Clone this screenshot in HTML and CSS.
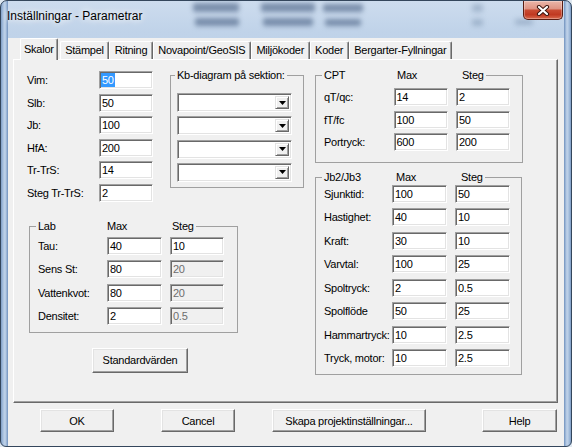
FILE: index.html
```html
<!DOCTYPE html>
<html lang="sv">
<head>
<meta charset="utf-8">
<title>Inställningar - Parametrar</title>
<link rel="stylesheet" href="styles.css">
</head>
<body>
<div class="window">
  <div class="glass" aria-hidden="true">
    <span class="blob b1"></span><span class="blob b2"></span><span class="blob b3"></span>
    <span class="blob b4"></span><span class="blob b5"></span><span class="blob b6"></span>
    <span class="blob faint b7"></span><span class="blob faint b8"></span><span class="blob faint b9"></span>
  </div>
  <div class="titlebar">
    <span class="title">Inställningar - Parametrar</span>
    <button class="close" aria-label="Stäng">
      <svg width="14" height="11" viewBox="0 0 14 11">
        <path d="M3 2L11 9M11 2L3 9" stroke="#3e1710" stroke-width="4.2" stroke-linecap="round"/>
        <path d="M3 2L11 9M11 2L3 9" stroke="#fff" stroke-width="2.2" stroke-linecap="round"/>
      </svg>
    </button>
  </div>
  <div class="client">
    <div class="tabs">
      <div class="tab active">Skalor</div>
      <div class="tab">Stämpel</div>
      <div class="tab">Ritning</div>
      <div class="tab">Novapoint/GeoSIS</div>
      <div class="tab">Miljökoder</div>
      <div class="tab">Koder</div>
      <div class="tab">Bergarter-Fyllningar</div>
    </div>
    <div class="panel">
      <div class="left-area">
        <div class="top-row">
          <div class="fields">
            <span class="lbl">Vim:</span><div class="field"><span class="sel">50</span></div>
            <span class="lbl">Slb:</span><div class="field">50</div>
            <span class="lbl">Jb:</span><div class="field">100</div>
            <span class="lbl">HfA:</span><div class="field">200</div>
            <span class="lbl">Tr-TrS:</span><div class="field">14</div>
            <span class="lbl">Steg Tr-TrS:</span><div class="field">2</div>
          </div>
          <fieldset class="group kb">
            <legend>Kb-diagram på sektion:</legend>
            <div class="combos">
              <div class="combo"><span class="drop"><svg width="7" height="4" viewBox="0 0 7 4"><path d="M0 0H7L3.5 4Z" fill="#000"/></svg></span></div>
              <div class="combo"><span class="drop"><svg width="7" height="4" viewBox="0 0 7 4"><path d="M0 0H7L3.5 4Z" fill="#000"/></svg></span></div>
              <div class="combo"><span class="drop"><svg width="7" height="4" viewBox="0 0 7 4"><path d="M0 0H7L3.5 4Z" fill="#000"/></svg></span></div>
              <div class="combo"><span class="drop"><svg width="7" height="4" viewBox="0 0 7 4"><path d="M0 0H7L3.5 4Z" fill="#000"/></svg></span></div>
            </div>
          </fieldset>
        </div>
        <fieldset class="group lab">
          <legend><span class="lg1">Lab</span><span class="lg2">Max</span><span>Steg</span></legend>
          <div class="grid3">
            <span class="lbl">Tau:</span><div class="field">40</div><div class="field">10</div>
            <span class="lbl">Sens St:</span><div class="field">80</div><div class="field dis">20</div>
            <span class="lbl">Vattenkvot:</span><div class="field">80</div><div class="field dis">20</div>
            <span class="lbl">Densitet:</span><div class="field">2</div><div class="field dis">0.5</div>
          </div>
        </fieldset>
        <button class="btn std">Standardvärden</button>
      </div>
      <div class="right-area">
        <fieldset class="group cpt">
          <legend><span class="lg1">CPT</span><span class="lg2">Max</span><span>Steg</span></legend>
          <div class="grid3">
            <span class="lbl">qT/qc:</span><div class="field">14</div><div class="field">2</div>
            <span class="lbl">fT/fc</span><div class="field">100</div><div class="field">50</div>
            <span class="lbl">Portryck:</span><div class="field">600</div><div class="field">200</div>
          </div>
        </fieldset>
        <fieldset class="group jb">
          <legend><span class="lg1">Jb2/Jb3</span><span class="lg2">Max</span><span>Steg</span></legend>
          <div class="grid3">
            <span class="lbl">Sjunktid:</span><div class="field">100</div><div class="field">50</div>
            <span class="lbl">Hastighet:</span><div class="field">40</div><div class="field">10</div>
            <span class="lbl">Kraft:</span><div class="field">30</div><div class="field">10</div>
            <span class="lbl">Varvtal:</span><div class="field">100</div><div class="field">25</div>
            <span class="lbl">Spoltryck:</span><div class="field">2</div><div class="field">0.5</div>
            <span class="lbl">Spolflöde</span><div class="field">50</div><div class="field">25</div>
            <span class="lbl">Hammartryck:</span><div class="field">10</div><div class="field">2.5</div>
            <span class="lbl">Tryck, motor:</span><div class="field">10</div><div class="field">2.5</div>
          </div>
        </fieldset>
      </div>
    </div>
    <div class="buttons">
      <button class="btn ok">OK</button>
      <button class="btn cancel">Cancel</button>
      <button class="btn skapa">Skapa projektinställningar...</button>
      <button class="btn help">Help</button>
    </div>
  </div>
</div>
</body>
</html>
```
FILE: styles.css
```css
* { box-sizing: border-box; }
html, body { margin: 0; padding: 0; }
body {
  width: 572px; height: 447px; overflow: hidden;
  background: #dfe8f1;
  font-family: "Liberation Sans", Arial, sans-serif;
  font-size: 11px; letter-spacing: -0.25px; color: #000;
}
.window {
  position: relative;
  width: 572px; height: 447px;
  border: 1px solid #34465c;
  border-radius: 7px 7px 6px 6px;
  padding: 0 7px 7px;
  overflow: hidden;
  background:
    linear-gradient(90deg, #7e9dc6 0, #a7c0de 2px, #c2d4ea 4px, #8eabd0 6px, #6f8fbb 7px, rgba(0,0,0,0) 7px),
    linear-gradient(270deg, #7e9dc6 0, #a7c0de 2px, #c2d4ea 4px, #8eabd0 6px, #6f8fbb 7px, rgba(0,0,0,0) 7px),
    linear-gradient(180deg, #cddcee 0, #c0d3e9 30px, #aac2de 100%);
}
.glass { position: absolute; inset: 0; pointer-events: none; }
.blob { position: absolute; background: rgba(58, 82, 118, .55); filter: blur(2.5px); border-radius: 2px; }
.blob.faint { background: rgba(80, 105, 140, .3); }
.b1 { left: 192px; top: 2px; width: 46px; height: 9px; }
.b2 { left: 194px; top: 17px; width: 44px; height: 8px; }
.b3 { left: 260px; top: 2px; width: 54px; height: 9px; }
.b4 { left: 262px; top: 17px; width: 50px; height: 8px; }
.b5 { left: 322px; top: 3px; width: 40px; height: 8px; }
.b6 { left: 324px; top: 18px; width: 36px; height: 7px; }
.b7 { left: 471px; top: 3px; width: 11px; height: 8px; }
.b8 { left: 471px; top: 18px; width: 11px; height: 7px; }
.b9 { left: 514px; top: 18px; width: 18px; height: 6px; }

.titlebar {
  position: relative;
  height: 29px;
  display: flex; align-items: center; justify-content: space-between;
}
.title {
  font-size: 12px; letter-spacing: 0;
  margin: 1px 0 0 -1px;
  text-shadow: 0 0 6px #fff, 0 0 10px rgba(255,255,255,.85);
}
.close {
  align-self: flex-start;
  width: 40px; height: 19px;
  margin-right: 1px;
  padding: 0;
  border: 1px solid #5a1d12; border-top: 0;
  border-radius: 0 0 5px 5px;
  background: linear-gradient(180deg, #ebb6a9 0%, #df9484 42%, #c94b32 52%, #c03921 76%, #d96b4f 100%);
  box-shadow: inset 0 0 0 1px rgba(255,255,255,.3);
  display: flex; align-items: center; justify-content: center;
}

.client {
  height: 409px;
  background: #f0f0f0;
}
.tabs {
  position: relative; z-index: 1;
  display: flex; align-items: flex-end;
  height: 22px;
  margin: 8px 0 0 12px;
}
.tab {
  height: 18px;
  margin-bottom: 1px;
  padding: 1px 4.5px 0;
  line-height: 14px;
  white-space: nowrap;
  text-align: center;
  background: #f0f0f0;
  border-top: 1px solid #fff;
  border-left: 1px solid #fff;
  border-right: 1px solid #696969;
  box-shadow: inset -1px 0 0 #a0a0a0;
  border-radius: 2px 2px 0 0;
}
.tab.active {
  height: 22px;
  margin-bottom: 0;
  margin-right: 2px;
  padding: 3px 3px 0;
}
.panel {
  display: flex;
  width: 545px; height: 344px;
  margin: -1px 0 0 5px;
  border: 1px solid;
  border-color: #fff #696969 #696969 #fff;
  box-shadow: inset -1px -1px 0 #a0a0a0;
}
.left-area {
  margin-left: 13px; width: 277px;
  display: flex; flex-direction: column; align-items: flex-start;
}
.right-area { margin-left: 11px; width: 208px; }
.top-row { display: flex; align-items: flex-start; }

.lbl { white-space: nowrap; line-height: 18px; }
.fields {
  margin-top: 11px;
  display: grid;
  grid-template-columns: 72px 54px;
  grid-auto-rows: 18px;
  row-gap: 4.6px;
  align-items: center;
}
.field {
  height: 18px;
  border: 1px solid;
  border-color: #a0a0a0 #fff #fff #a0a0a0;
  box-shadow: inset 1px 1px 0 #696969, inset -1px -1px 0 #e3e3e3;
  background: #fff;
  padding-left: 2px;
  line-height: 16px;
  white-space: nowrap; overflow: hidden;
}
.field.dis { background: #f0f0f0; color: #6d6d6d; }
.sel {
  display: inline-block; vertical-align: top;
  margin: 1px 0 0 -1px; padding: 0 1px;
  line-height: 14px;
  background: #3399ff; color: #fff;
}

.group { margin: 0; border: 1px solid #a0a0a0; min-width: 0; }
.group legend {
  padding: 0 2px; margin-left: -2px;
  line-height: 13px; white-space: nowrap;
}
.lg1 { display: inline-block; width: 73px; }
.lg2 { display: inline-block; width: 65px; }
.lab .lg1 { width: 69px; }
.jb .lg1 { width: 72px; }

.kb { margin: 9px 0 0 17px; width: 134px; padding: 11px 11px 5px 6px; }
.combos { display: grid; grid-auto-rows: 19px; row-gap: 4.33px; }
.combo {
  height: 19px;
  display: flex; justify-content: flex-end;
  padding: 2px;
  border: 1px solid;
  border-color: #a0a0a0 #fff #fff #a0a0a0;
  box-shadow: inset 1px 1px 0 #696969, inset -1px -1px 0 #e3e3e3;
  background: #fff;
}
.drop {
  width: 14px; height: 100%;
  display: flex; align-items: center; justify-content: center;
  background: #f0f0f0;
  border: 1px solid;
  border-color: #e3e3e3 #696969 #696969 #e3e3e3;
  box-shadow: inset 1px 1px 0 #fff, inset -1px -1px 0 #a0a0a0;
}

.grid3 {
  display: grid;
  grid-template-columns: 61px 54px 54px;
  justify-content: space-between;
  grid-auto-rows: 18px;
  align-items: center;
}
.lab { margin: 18px 0 0 2px; width: 209px; padding: 4px 13px 7px 8px; }
.lab .grid3 { grid-template-columns: 61px 55px 54px; row-gap: 5.3px; }
.cpt { margin-top: 9px; width: 208px; padding: 6px 12px 11px 8px; }
.cpt .grid3 { row-gap: 4.5px; }
.jb { margin-top: 8px; width: 207px; padding: 1px 11px 7px 8px; }
.jb .grid3 { grid-template-columns: 60px 55px 55px; row-gap: 5.43px; }

.btn {
  font: inherit; letter-spacing: inherit; color: #000;
  background: #f0f0f0;
  padding: 0;
  border: 1px solid;
  border-color: #fff #696969 #696969 #fff;
  box-shadow: inset -1px -1px 0 #a0a0a0, inset 1px 1px 0 #e3e3e3;
  border-radius: 0;
  white-space: nowrap;
}
.std { margin: 15px 0 0 65px; width: 96px; height: 25px; }
.buttons { display: flex; margin-top: 6px; padding-left: 32px; }
.buttons .btn { height: 23px; }
.ok { width: 74px; }
.cancel { width: 74px; margin-left: 47px; }
.skapa { width: 154px; margin-left: 37px; }
.help { width: 75px; margin-left: 56px; }
```
